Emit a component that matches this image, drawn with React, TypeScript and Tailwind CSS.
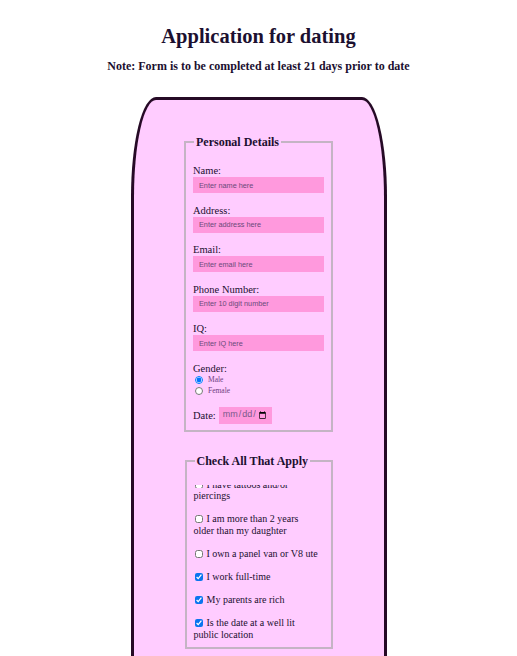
export default function App() {
    const checks = [
        {label: "I am more than 2 years older than my daughter", checked: false},
        {label: "I own a panel van or V8 ute", checked: false},
        {label: "I work full-time", checked: true},
        {label: "My parents are rich", checked: true},
        {label: "Is the date at a well lit public location", checked: true},
    ]

    const fields = [
        {label: "Name:", placeholder: "Enter name here"},
        {label: "Address:", placeholder: "Enter address here"},
        {label: "Email:", placeholder: "Enter email here"},
        {label: "Phone Number:", placeholder: "Enter 10 digit number"},
        {label: "IQ:", placeholder: "Enter IQ here"},
    ]

    return (
        <div className="bg-white w-full min-h-screen text-[#1c1030] font-['Liberation_Serif',serif] pt-[24px] overflow-hidden">
            <h1 className="text-center text-[20.5px] leading-[24px] font-bold">Application for dating</h1>
            <p className="text-center text-[12px] leading-[14px] font-bold mt-[11px]">
                Note: Form is to be completed at least 21 days prior to date
            </p>

            <form className="mx-auto mt-[24px] w-[256px] bg-[#ffccff] border-[3px] border-b-0 border-[#260a26] rounded-tl-[25px_100px] rounded-tr-[25px_100px] pt-[35px] pb-[40px]">
                <fieldset className="mx-auto w-[148px] border-2 border-[#c4b4c4] px-[7px] pb-[6px]">
                    <legend className="px-[2px] ml-[1px] text-[12px] leading-[14px] font-bold">Personal Details</legend>
                    <div className="mt-[15px]">
                        {fields.map((f) => (
                            <div key={f.label} className="mb-[10.5px]">
                                <label className="block text-[10.5px] leading-[13px]">{f.label}</label>
                                <input
                                    type="text"
                                    placeholder={f.placeholder}
                                    className="block w-[131px] h-[16px] bg-[#ff99dd] px-[6px] text-[7.3px] font-['Liberation_Sans',sans-serif] placeholder:text-[#6a4a7a] outline-none"
                                />
                            </div>
                        ))}
                        <div>
                            <label className="block text-[10.5px] leading-[13px]">Gender:</label>
                            <label className="flex items-center h-[11px] text-[7.5px] text-[#6e3e7e]">
                                <input type="radio" name="gender" defaultChecked className="w-[8px] h-[8px] m-0 ml-[2px] mr-[5px]"/>
                                Male
                            </label>
                            <label className="flex items-center h-[11px] text-[7.5px] text-[#6e3e7e]">
                                <input type="radio" name="gender" className="w-[8px] h-[8px] m-0 ml-[2px] mr-[5px]"/>
                                Female
                            </label>
                        </div>
                        <div className="flex items-center mt-[10px]">
                            <label className="text-[10.5px] leading-[13px] mr-[3px]">Date:</label>
                            <input
                                type="date"
                                className="w-[53px] h-[17px] bg-[#ff99dd] px-[3px] text-[9px] font-['Liberation_Sans',sans-serif] text-[#7a5a8a]"
                            />
                        </div>
                    </div>
                </fieldset>

                <fieldset className="mx-auto mt-[22px] w-[148px] border-2 border-[#c4b4c4] pl-[7px] pr-[10px] pb-[6px]">
                    <legend className="px-[2px] ml-[1px] text-[12px] leading-[14px] font-bold">Check All That Apply</legend>
                    <div className="mt-[17px] text-[10px] leading-[12px]">
                        {/* first line of this one is squashed in the original */}
                        <div className="mb-[11px]">
                            <div className="h-[3px] overflow-hidden flex items-end">
                                <div className="flex items-center -mb-[3px]">
                                    <input type="checkbox" className="w-[8px] h-[8px] m-0 ml-[1px] mr-[4px]"/>
                                    <span className="whitespace-nowrap">I have tattoos and/or</span>
                                </div>
                            </div>
                            <div className="mt-[2px]">piercings</div>
                        </div>
                        {checks.map((c) => (
                            <label key={c.label} className="block mb-[11px] last:mb-0">
                                <input
                                    type="checkbox"
                                    defaultChecked={c.checked}
                                    className="w-[8px] h-[8px] m-0 ml-[1px] mr-[4px] align-[-1px] accent-[#0a74ef]"
                                />
                                {c.label}
                            </label>
                        ))}
                    </div>
                </fieldset>
            </form>
        </div>
    )
}
